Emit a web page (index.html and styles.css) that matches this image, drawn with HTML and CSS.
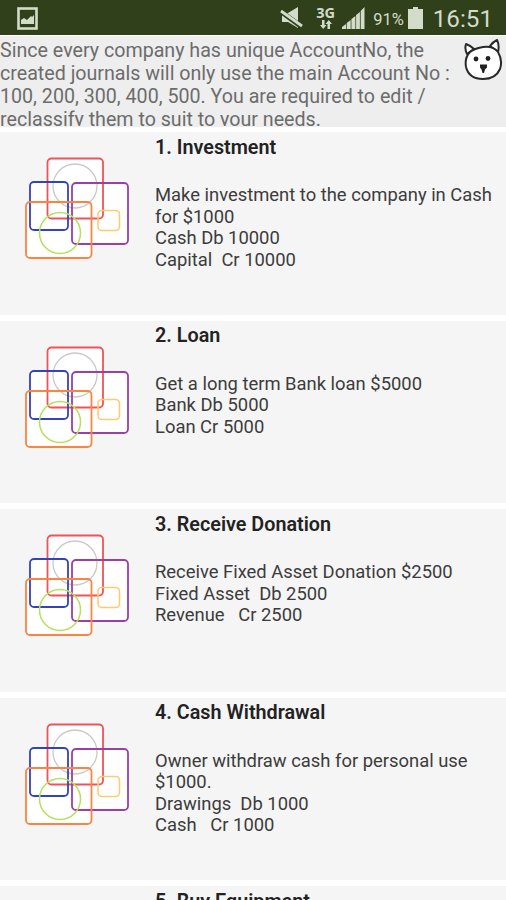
FILE: index.html
```html
<!DOCTYPE html>
<html lang="en">
<head>
  <meta charset="UTF-8" />
  <meta name="viewport" content="width=device-width, initial-scale=1.0"/>
  <title>Journals</title>
  <link rel="stylesheet" href="styles.css">
</head>
<body>
  <!-- Shared journal icon -->
  <svg class="sprite" aria-hidden="true">
    <symbol id="journal-icon" viewBox="0 0 106 104">
      <g fill="#fff">
        <rect x="23.5" y="2.5" width="55" height="60" rx="4"/>
        <rect x="6" y="26" width="38" height="48" rx="4"/>
        <rect x="48" y="27" width="56" height="61" rx="4"/>
        <rect x="2" y="46" width="65" height="56" rx="4"/>
      </g>
      <g fill="none" stroke-width="1.8">
        <rect x="23.5" y="2.5" width="55.5" height="60" rx="4" stroke="#f0525a"/>
        <circle cx="51" cy="30" r="22" stroke="#c9c9cd" stroke-width="1.3"/>
        <rect x="6" y="26" width="38" height="48" rx="4" stroke="#3542c0"/>
        <rect x="48" y="27" width="56" height="61" rx="4" stroke="#9a3fa8"/>
        <rect x="2" y="46" width="65.5" height="56" rx="4" stroke="#fb8440"/>
        <circle cx="36" cy="77" r="20.5" stroke="#b5e05a" stroke-width="1.5"/>
        <rect x="74" y="54.5" width="21.5" height="20" rx="4" stroke="#ffcb70" stroke-width="1.6"/>
      </g>
    </symbol>
  </svg>

  <div class="screen">
    <div class="status-bar">
      <svg class="picture-icon" width="21" height="23" viewBox="0 0 21 23">
        <rect x="1.5" y="1.5" width="18" height="20" fill="none" stroke="#d3dbc9" stroke-width="2.6"/>
        <path d="M4 17v-4l3-2 3 2 4-4 1 1 2-2v9z" fill="#d3dbc9"/>
      </svg>
      <svg class="mute-icon" width="24" height="22" viewBox="0 0 24 22">
        <path d="M2 6h6l10-6v21l-10-6H2z" fill="#d3dbc9"/>
        <path d="M0 4l22 16" stroke="#30401b" stroke-width="5"/>
        <path d="M1 4l21 15" stroke="#d3dbc9" stroke-width="2.8"/>
      </svg>
      <div class="network">
        <span>3G</span>
        <svg width="12" height="9" viewBox="0 0 12 9" fill="#d3dbc9">
          <path d="M2 0h2.5v5h2L3.2 9 0 5h2zM7.5 9H10V4h2L8.8 0 5.500 4h2z"/>
        </svg>
      </div>
      <svg class="signal-icon" width="23" height="22" viewBox="0 0 23 22" fill="#d3dbc9">
        <path d="M0 22v-2l4-3v5zM4.7 22v-6l4-3v9zM9.4 22V12l4-3v13zM14.1 22V8l3.8-3v17zM18.7 22V4L22.5 0v22z"/>
      </svg>
      <span class="battery-level">91%</span>
      <svg class="battery-icon" width="15" height="22" viewBox="0 0 15 22" fill="#d3dbc9">
        <path d="M5 0h5v2h5v20H0V2h5z"/>
      </svg>
      <span class="clock">16:51</span>
    </div>

    <div class="notice">
      <p>Since every company has unique AccountNo, the<br>created journals will only use the main Account No :<br>100, 200, 300, 400, 500. You are required to edit /<br>reclassify them to suit to your needs.</p>
      <svg class="mascot" width="40" height="44" viewBox="0 0 40 44" fill="#fff" stroke="#29292b" stroke-width="2" stroke-linejoin="round">
        <path d="M4 15C2 11 2 8 3 5c3 1 6 3 8 5zM27 7c2-3 5-5 7-6 2 4 2 8 1 12z"/>
        <path d="M7 13c3-3 8-4 13-5 7-1 12 1 15 5 3 5 4 11 2 17-3 7-9 10-17 10-9 0-15-4-17-12-1-6 1-12 4-15z"/>
        <g fill="#202022" stroke="none">
          <circle cx="13" cy="20" r="2.4"/>
          <circle cx="25" cy="19.5" r="2.4"/>
          <path d="M17 25.5h7v3l-2 2-1 3.5h-1.500l-1-3.500-1.500-2z"/>
        </g>
      </svg>
    </div>

    <div class="journal-list">
      <div class="journal">
        <svg class="journal-icon"><use href="#journal-icon"/></svg>
        <div class="journal-text">
          <h2>1. Investment</h2>
          <p>Make investment to the company in Cash
for $1000
Cash Db 10000
Capital  Cr 10000</p>
        </div>
      </div>
      <div class="journal">
        <svg class="journal-icon"><use href="#journal-icon"/></svg>
        <div class="journal-text">
          <h2>2. Loan</h2>
          <p>Get a long term Bank loan $5000
Bank Db 5000
Loan Cr 5000</p>
        </div>
      </div>
      <div class="journal">
        <svg class="journal-icon"><use href="#journal-icon"/></svg>
        <div class="journal-text">
          <h2>3. Receive Donation</h2>
          <p>Receive Fixed Asset Donation $2500
Fixed Asset  Db 2500
Revenue   Cr 2500</p>
        </div>
      </div>
      <div class="journal">
        <svg class="journal-icon"><use href="#journal-icon"/></svg>
        <div class="journal-text">
          <h2>4. Cash Withdrawal</h2>
          <p>Owner withdraw cash for personal use
$1000.
Drawings  Db 1000
Cash   Cr 1000</p>
        </div>
      </div>
      <div class="journal">
        <svg class="journal-icon"><use href="#journal-icon"/></svg>
        <div class="journal-text">
          <h2>5. Buy Equipment</h2>
        </div>
      </div>
    </div>
  </div>
</body>
</html>
```
FILE: styles.css
```css
:root {
  --bar: #30401b;
  --bar-text: #d3dbc9;
  --card: #f5f5f5;
}

* {
  box-sizing: border-box;
}

body {
  margin: 0;
  background-color: #fff;
  font-family: Roboto, sans-serif;
  overflow: hidden;
}

h2,
p {
  margin: 0;
}

svg {
  display: block;
  flex-shrink: 0;
}

.sprite {
  display: none;
}

.screen {
  height: 900px;
  overflow: hidden;
}

.status-bar {
  display: flex;
  height: 35px;
  padding: 7px 13px 0 17px;
  background-color: var(--bar);
  color: var(--bar-text);
}

.mute-icon {
  margin-left: 242px;
}

.network {
  display: flex;
  flex-direction: column;
  align-items: center;
  width: 22px;
  margin-left: 11px;
  font-family: "Open Sans", sans-serif;
  font-size: 14.5px;
  font-weight: 700;
  line-height: 12px;
}

.network svg {
  margin-top: 1px;
}

.signal-icon {
  margin-left: 6px;
}

.battery-level {
  margin-left: 8px;
  font-size: 16.5px;
  line-height: 25px;
  width: 31px;
  white-space: nowrap;
}

.battery-icon {
  margin-left: 4px;
}

.clock {
  margin-left: 10px;
  font-size: 24.2px;
  line-height: 25px;
}

.notice {
  display: flex;
  justify-content: space-between;
  height: 90.5px;
  padding: 3px 3px 0 0;
  margin-top: 1px;
  background-color: #eee;
  overflow: hidden;
}

.notice p {
  height: 87px;
  overflow: hidden;
  color: #6c6c6c;
  font-size: 19.65px;
  line-height: 23px;
  white-space: nowrap;
}

.journal-list {
  display: flex;
  flex-direction: column;
  gap: 6px;
  padding-top: 5.5px;
}

.journal {
  display: flex;
  flex-shrink: 0;
  height: 182.5px;
  padding-left: 24px;
  background-color: var(--card);
}

.journal-icon {
  width: 106px;
  height: 104px;
  margin-top: 24px;
}

.journal-text {
  padding: 3.5px 0 0 25px;
  color: #3c3c3c;
}

.journal h2 {
  color: #222;
  font-size: 19.75px;
  font-weight: 600;
  line-height: 23px;
}

.journal p {
  margin-top: 25.5px;
  font-size: 18.4px;
  line-height: 21.5px;
  white-space: pre;
}
```
